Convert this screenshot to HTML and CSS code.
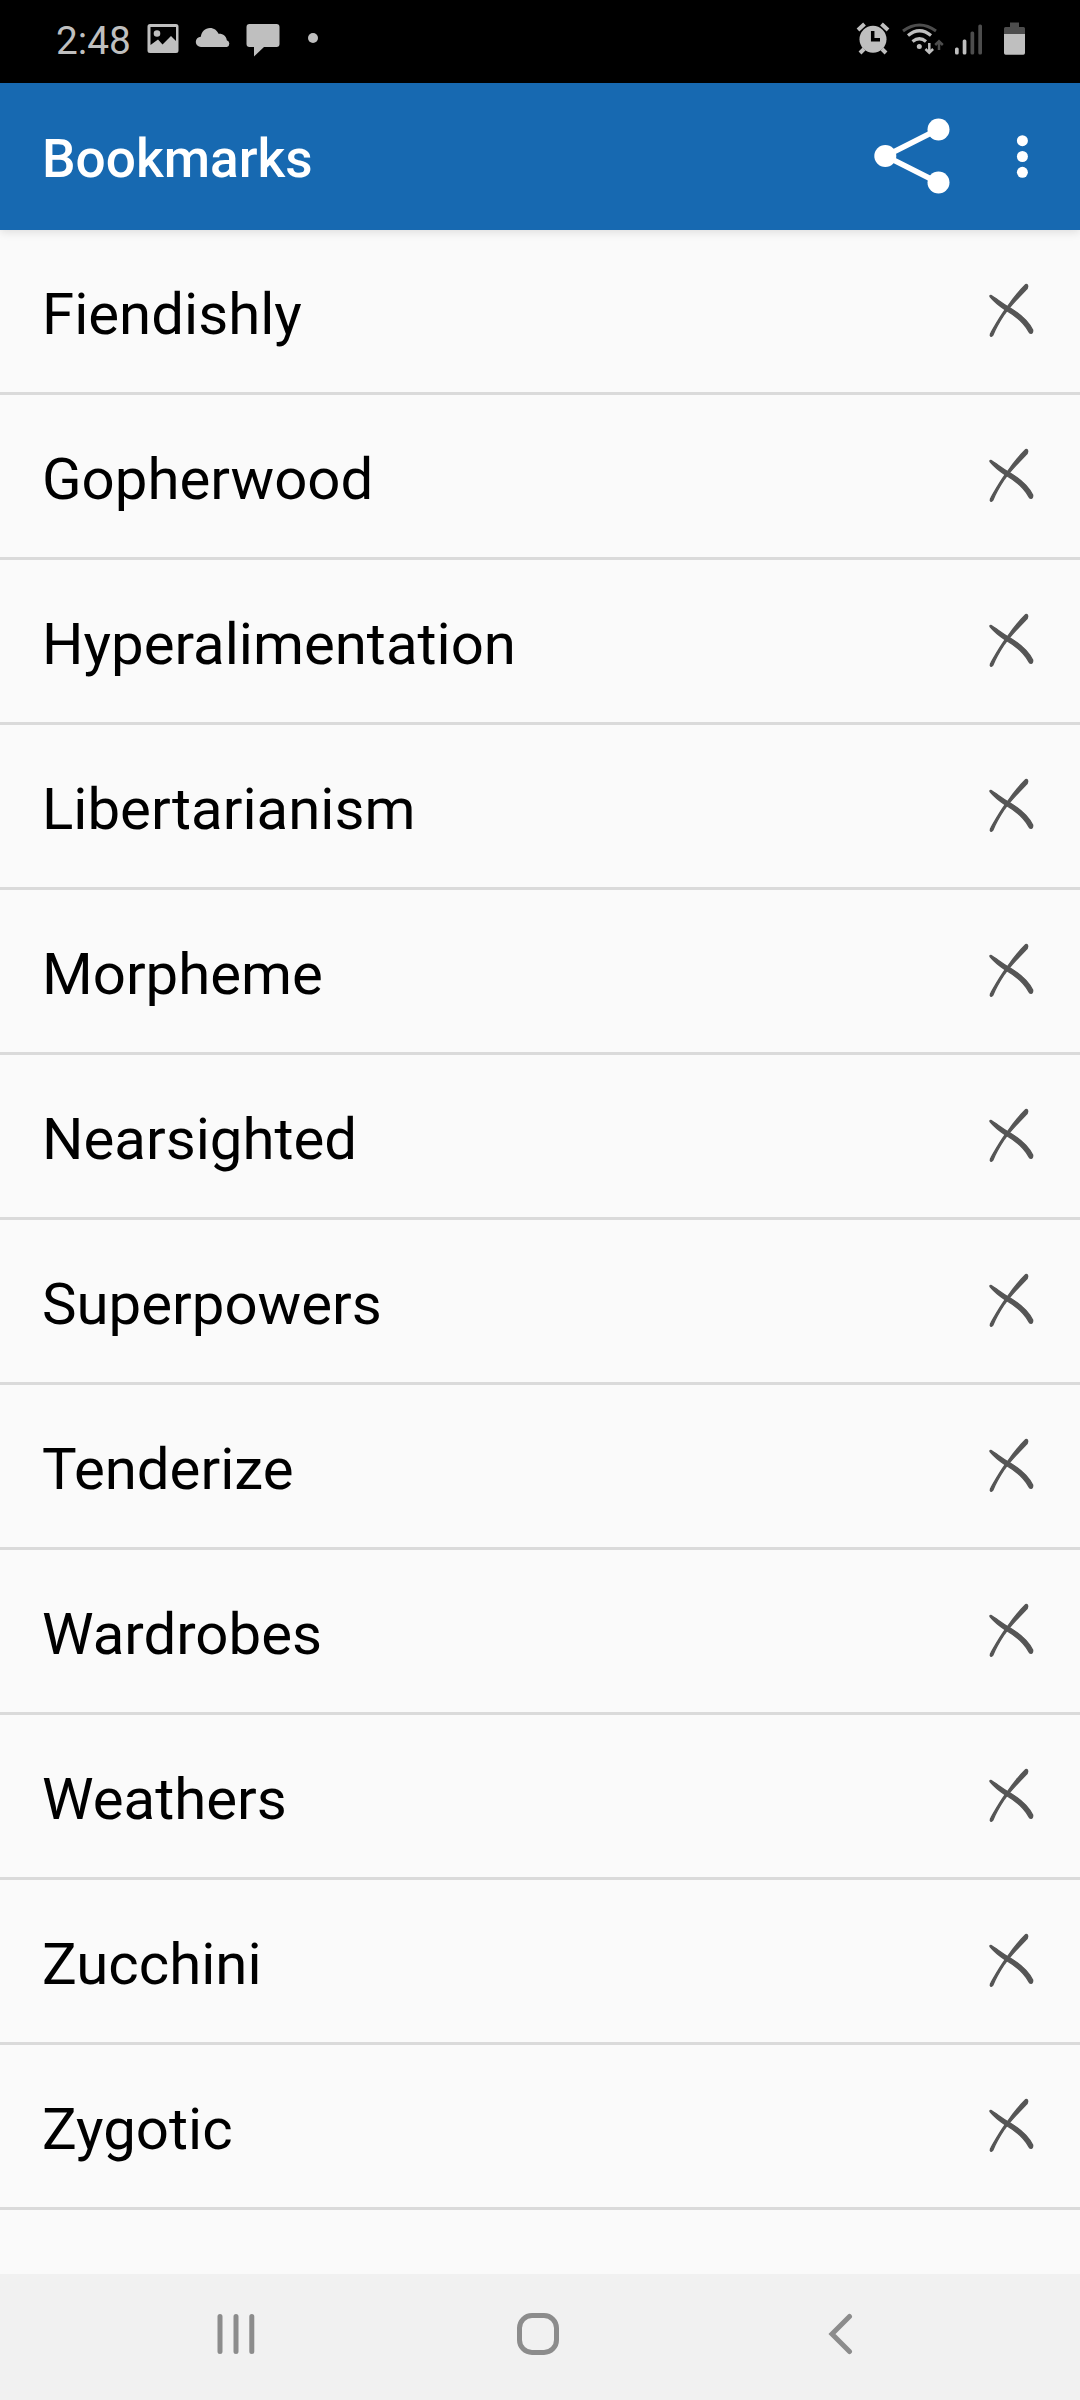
FILE: index.html
```html
<!DOCTYPE html>
<html lang="en">
<head>
<meta charset="utf-8">
<title>Bookmarks</title>
<link rel="stylesheet" href="styles.css">
</head>
<body>
<svg class="defs" width="0" height="0" aria-hidden="true">
  <symbol id="cross" viewBox="-1 -1 50 58">
    <path d="M2.4 13 Q1.2 11.5 2.8 11.3 C7 13.7 13 18.400 20 22.800 C30 28.500 39 35 44.700 46 Q44.900 49.200 43 49.400 Q41.500 49.300 40.700 47.500 C36 39 28 32 17.500 26 C11 21.500 6 17.500 2.400 13Z"/>
    <path d="M37.500 .7 Q39.800 -.3 39.700 2.800 Q39.600 4.800 37.700 6 C30 14 22 22.500 16.500 30 C11.500 37.500 8 43.500 4.900 51 Q3 53.300 2.300 51.500 Q2.200 49.500 3.200 48.300 C8 40 12.500 32 18.500 24 C24 16 30 8 37.500 .7Z"/>
  </symbol>
</svg>
<div class="screen">
  <header class="status">
    <div class="status-left">
      <span class="time">2:48</span>
      <svg class="i-photo" viewBox="147 23 32 32"><path fill-rule="evenodd" d="M150 24h26q2.500 0 2.500 2.500v24q0 2.500-2.500 2.500h-26q-2.500 0-2.500-2.500v-24q0-2.500 2.500-2.500zM150.500 27v18l7.500-5.500 4.500 5 8.500-8.500 5 5V27zM157 30.200a3.300 3.300 0 1 1 0 6.600 3.300 3.300 0 0 1 0-6.600z"/></svg>
      <svg class="i-cloud" viewBox="195 23 36 32"><path d="M201 47a5 5 0 0 1-.2-10.200C201.500 31.500 205 28 210 28c4 0 7 2.300 8.500 5.800 4.500-.3 7.800 2.500 8.300 6.400A3.600 3.600 0 0 1 227 47z"/></svg>
      <svg class="i-chat" viewBox="246 23 34 35"><path d="M249.500 24h27q3 0 3 3v17q0 3-3 3H264l-10 9.500V47h-4.500q-3 0-3-3V27q0-3 3-3z"/></svg>
      <i class="more-dot"></i>
    </div>
    <div class="status-right">
      <svg class="i-alarm" viewBox="856 22 34 34"><circle cx="873" cy="39.200" r="13.500"/><path class="stroke" stroke-width="4" d="M858 30l6.500-6M888 30l-6.500-6M864 49l-4 4M882 49l4 4"/><path stroke="#000" stroke-width="3.500" fill="none" d="M872.700 31v8.700h7.300"/></svg>
      <svg class="i-wifi" viewBox="901 22 44 34"><path class="stroke dim" stroke-width="3" d="M903 31q16.500-12 33 0"/><path class="stroke" stroke-width="3.200" d="M908 35.500q11.500-9.500 23 0M912.500 41.500q7-5.500 13.500 0"/><circle cx="919.300" cy="46.500" r="2.500"/><path class="stroke" stroke-width="2.500" d="M929.300 43v9M925.500 49l3.800 3.800 3.800-3.800"/><path class="stroke dim" stroke-width="2.500" d="M939 50v-8.500M935.200 45l3.800-3.800 3.800 3.800"/></svg>
      <svg class="i-signal" viewBox="954 23 30 33"><rect x="955" y="47.500" width="3.700" height="7" rx="1.500"/><rect x="962.700" y="39.500" width="3.700" height="15" rx="1.500"/><rect class="dimf" x="970.500" y="31.500" width="3.700" height="23" rx="1.500"/><rect class="dimf" x="978.300" y="24.500" width="3.700" height="30" rx="1.500"/></svg>
      <svg class="i-battery" viewBox="1003 22 23 34"><path class="dimf" d="M1010 22.500h9V27h4.500q1.500 0 1.500 1.500V35h-21v-6.500q0-1.500 1.500-1.500h4.500z"/><path d="M1004 34h21v19q0 1.700-1.700 1.700h-17.600q-1.700 0-1.700-1.700z"/></svg>
    </div>
  </header>
  <div class="appbar">
    <h1>Bookmarks</h1>
    <svg class="i-share" viewBox="874 118 76 76"><path stroke="#fff" stroke-width="5.500" fill="none" d="M938 129.500L885.500 156 938 182.500"/><circle cx="885.300" cy="156" r="11"/><circle cx="938.500" cy="129.500" r="11"/><circle cx="938.500" cy="182.500" r="11"/></svg>
    <svg class="i-menu" viewBox="1016 134 13 45"><circle cx="1022.400" cy="140.700" r="5.500"/><circle cx="1022.400" cy="156.500" r="5.500"/><circle cx="1022.400" cy="172.300" r="5.500"/></svg>
  </div>
  <ul class="list">
    <li><span>Fiendishly</span><svg class="cross"><use href="#cross"/></svg></li>
    <li><span>Gopherwood</span><svg class="cross"><use href="#cross"/></svg></li>
    <li><span>Hyperalimentation</span><svg class="cross"><use href="#cross"/></svg></li>
    <li><span>Libertarianism</span><svg class="cross"><use href="#cross"/></svg></li>
    <li><span>Morpheme</span><svg class="cross"><use href="#cross"/></svg></li>
    <li><span>Nearsighted</span><svg class="cross"><use href="#cross"/></svg></li>
    <li><span>Superpowers</span><svg class="cross"><use href="#cross"/></svg></li>
    <li><span>Tenderize</span><svg class="cross"><use href="#cross"/></svg></li>
    <li><span>Wardrobes</span><svg class="cross"><use href="#cross"/></svg></li>
    <li><span>Weathers</span><svg class="cross"><use href="#cross"/></svg></li>
    <li><span>Zucchini</span><svg class="cross"><use href="#cross"/></svg></li>
    <li><span>Zygotic</span><svg class="cross"><use href="#cross"/></svg></li>
  </ul>
  <nav class="nav">
    <svg class="i-recent" viewBox="217 2313 38 42"><path d="M220 2316.500v35M236 2316.500v35M251.800 2316.500v35"/></svg>
    <svg class="i-home" viewBox="516 2312 44 44"><rect x="519.500" y="2315.500" width="37" height="37" rx="12.500"/></svg>
    <svg class="i-back" viewBox="828 2313 26 42"><path d="M849.500 2316.500L832 2334l17.500 17.500"/></svg>
  </nav>
</div>
</body>
</html>
```
FILE: styles.css
```css
* { box-sizing: border-box; }
body { margin: 0; background: #fafafa; font-family: Roboto, sans-serif; }
svg { display: block; flex: none; }
.defs { position: absolute; }
.screen { width: 1080px; height: 2400px; display: flex; flex-direction: column; overflow: hidden; }

.status { height: 83px; padding: 22px 54px 0 56px; background: #000; color: #bfbfbf; fill: #bfbfbf; display: flex; justify-content: space-between; }
.status-left, .status-right { display: flex; align-items: flex-start; }
.time { width: 91px; padding-top: 1px; font-size: 38.800px; line-height: 36px; white-space: nowrap; }
.stroke { fill: none; stroke: #bfbfbf; }
.stroke.dim { stroke: #4d4d4d; }
.dimf { fill: #4d4d4d; }
.i-photo { width: 32px; height: 32px; margin-top: 1px; }
.i-cloud { width: 36px; height: 32px; margin: 1px 0 0 16px; }
.i-chat { width: 34px; height: 35px; margin: 1px 0 0 15px; }
.more-dot { width: 10px; height: 10px; margin: 11px 0 0 28px; border-radius: 50%; background: #bfbfbf; }
.i-alarm { width: 34px; height: 34px; }
.i-wifi { width: 44px; height: 34px; margin-left: 11px; }
.i-signal { width: 30px; height: 33px; margin: 1px 0 0 9px; }
.i-battery { width: 23px; height: 34px; margin-left: 19px; }

.appbar { position: relative; z-index: 1; height: 147px; padding: 0 51px 0 42px; background: #1769b1; fill: #fff; color: #fff; display: flex; align-items: center; box-shadow: 0 2px 9px rgba(0, 0, 0, .12); }
.appbar h1 { flex: 1; margin: 0; padding-top: 5px; font-size: 53.200px; font-weight: 500; line-height: 62px; }
.i-share { width: 76px; height: 76px; margin: 0 66px 1px 0; }
.i-menu { width: 13px; height: 45px; }

.list { flex: 1; margin: 0; padding: 0; list-style: none; background: #fafafa; }
.list li { height: 165px; padding: 0 43px 0 42px; border-bottom: 3px solid #dadada; display: flex; align-items: center; justify-content: space-between; color: #000; font-size: 58.150px; line-height: 68px; }
.list span { padding-top: 5px; }
.cross { width: 50px; height: 58px; margin-top: 2px; fill: #555; stroke: #555; stroke-width: 1.3; }

.nav { height: 126px; padding: 0 0 6px 217px; background: #f1f1f1; display: flex; align-items: center; fill: none; stroke: #8c8c8c; stroke-width: 5; stroke-linecap: round; }
.i-recent { width: 38px; height: 42px; }
.i-home { width: 44px; height: 44px; margin-left: 261px; }
.i-back { width: 26px; height: 42px; margin-left: 268px; }
```
